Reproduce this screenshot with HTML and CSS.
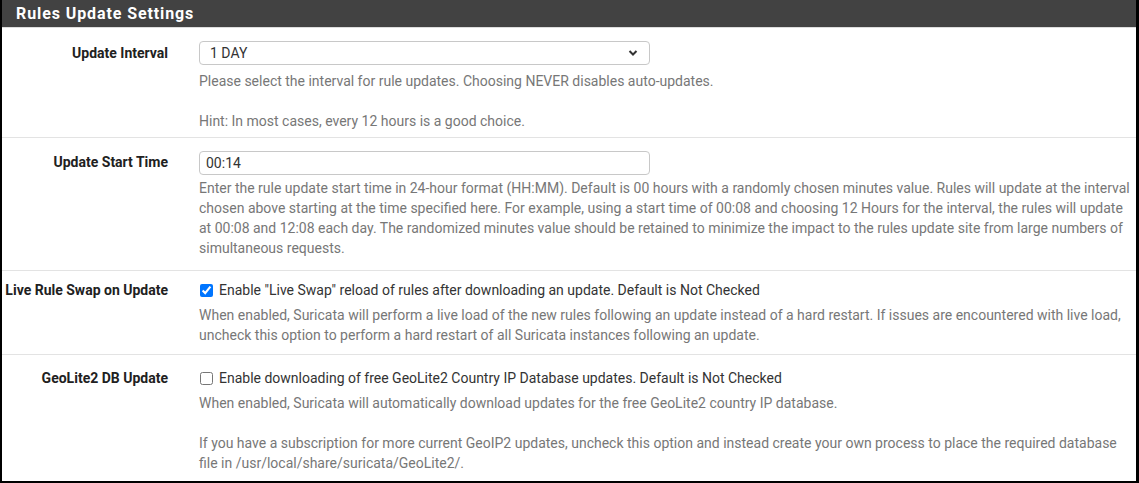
FILE: index.html
```html
<!DOCTYPE html>
<html>
<head>
<meta charset="utf-8">
<link rel="stylesheet" href="styles.css">
</head>
<body>
<div class="panel">
  <div class="panel-heading">Rules Update Settings</div>
  <div class="panel-body">
    <div class="form-row row-interval">
      <label class="row-label">Update Interval</label>
      <div class="row-control">
        <div class="select-wrap">
          <select class="form-select">
            <option>1 DAY</option>
          </select>
          <svg class="select-caret" width="10" height="8" viewBox="0 0 10 8"><path d="M1.5 2 L5 5.5 L8.5 2" fill="none" stroke="#333" stroke-width="2"/></svg>
        </div>
        <div class="help">Please select the interval for rule updates. Choosing NEVER disables auto-updates.<br><br>Hint: In most cases, every 12 hours is a good choice.</div>
      </div>
    </div>
    <div class="form-row row-start">
      <label class="row-label">Update Start Time</label>
      <div class="row-control">
        <input class="form-input" type="text" value="00:14">
        <div class="help">Enter the rule update start time in 24-hour format (HH:MM). Default is 00 hours with a randomly chosen minutes value. Rules will update at the interval chosen above starting at the time specified here. For example, using a start time of 00:08 and choosing 12 Hours for the interval, the rules will update at 00:08 and 12:08 each day. The randomized minutes value should be retained to minimize the impact to the rules update site from large numbers of simultaneous requests.</div>
      </div>
    </div>
    <div class="form-row row-swap">
      <label class="row-label">Live Rule Swap on Update</label>
      <div class="row-control">
        <label class="check"><input type="checkbox" checked> Enable "Live Swap" reload of rules after downloading an update. Default is Not Checked</label>
        <div class="help help-check">When enabled, Suricata will perform a live load of the new rules following an update instead of a hard restart. If issues are encountered with live load, uncheck this option to perform a hard restart of all Suricata instances following an update.</div>
      </div>
    </div>
    <div class="form-row row-geo">
      <label class="row-label">GeoLite2 DB Update</label>
      <div class="row-control">
        <label class="check"><input type="checkbox"> Enable downloading of free GeoLite2 Country IP Database updates. Default is Not Checked</label>
        <div class="help help-check">When enabled, Suricata will automatically download updates for the free GeoLite2 country IP database.<br><br>If you have a subscription for more current GeoIP2 updates, uncheck this option and instead create your own process to place the required database file in /usr/local/share/suricata/GeoLite2/.</div>
      </div>
    </div>
  </div>
</div>
</body>
</html>
```

FILE: styles.css
```css
* { box-sizing: border-box; }
html, body { margin: 0; padding: 0; background: #000; }
body {
  font-family: Roboto, "Liberation Sans", Arial, sans-serif;
  font-size: 14px;
  line-height: 20px;
  color: #212121;
  width: 1139px;
  height: 483px;
  overflow: hidden;
}
.panel {
  background: #fff;
  margin: 0 3px 0 2px;
  height: 481px;
  overflow: hidden;
}
.panel-heading {
  background: #424242;
  color: #fff;
  height: 28px;
  line-height: 28px;
  font-weight: 700;
  font-size: 16px;
  letter-spacing: 0.9px;
  border-bottom: 1px solid #ddd;
  margin-left: -2px;
  margin-right: -3px;
  padding-left: 16px;
}
.form-row {
  display: grid;
  grid-template-columns: 166px 1fr;
  column-gap: 31px;
  border-bottom: 1px solid #e3e3e3;
}
.row-interval { padding: 13px 0 6px; }
.row-start { padding: 13px 0 12px; }
.row-swap { padding: 9px 0 9px; }
.row-geo { padding: 13px 0 10px; border-bottom: none; }
.row-label {
  text-align: right;
  font-weight: 700;
  font-size: 14px;
  color: #212121;
  line-height: 20px;
}
.row-interval .row-label { padding-top: 2px; }
.row-start .row-label { padding-top: 1px; }
.row-control { padding-right: 6px; }
.select-wrap { position: relative; width: 451px; }
.form-select {
  appearance: none;
  -webkit-appearance: none;
  width: 451px;
  height: 24px;
  border: 1px solid #c8c8c8;
  border-radius: 4px;
  background: #fff;
  font-family: Roboto, "Liberation Sans", Arial, sans-serif;
  font-size: 14px;
  color: #333;
  padding: 0 10px;
  margin: 0;
  display: block;
}
.select-caret {
  position: absolute;
  right: 12px;
  top: 8px;
  pointer-events: none;
}
.form-input {
  display: block;
  width: 451px;
  height: 24px;
  border: 1px solid #c8c8c8;
  border-radius: 4px;
  font-family: Roboto, "Liberation Sans", Arial, sans-serif;
  font-size: 14px;
  color: #333;
  padding: 0 6px;
  margin: 0;
}
.help {
  color: #777;
  margin-top: 6px;
}
.row-start .help { margin-top: 3px; }
.help-check { margin-top: 5px; }
.check {
  display: flex;
  align-items: center;
  color: #333;
  height: 20px;
}
.check input {
  width: 13px;
  height: 13px;
  margin: 0 6px 0 1px;
}
```
